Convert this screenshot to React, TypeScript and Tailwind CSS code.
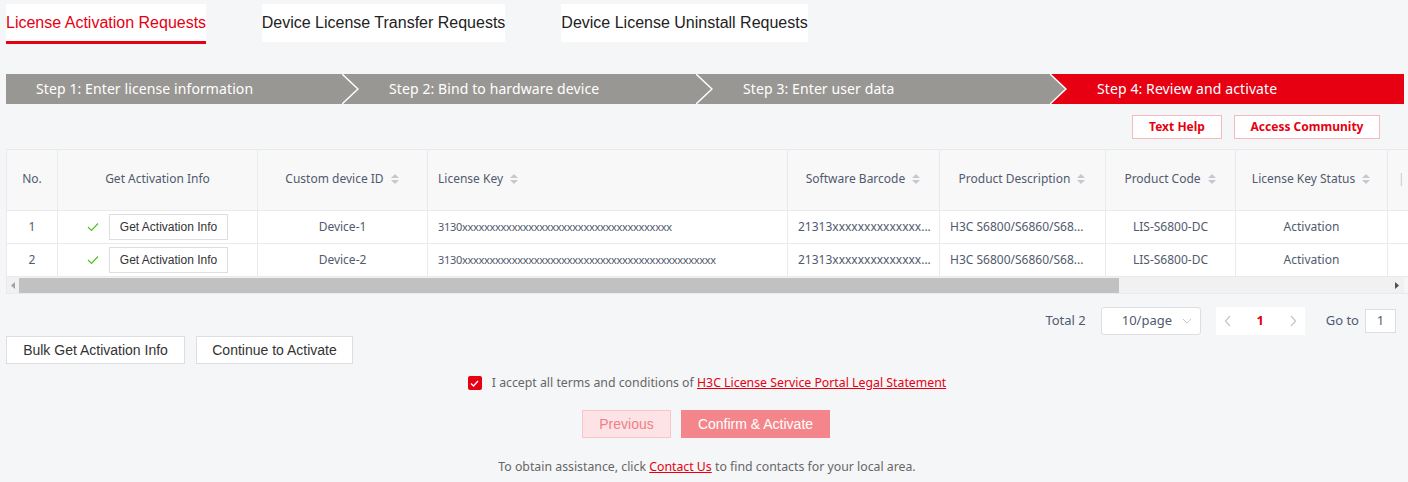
import React from "react";

const SANS = "font-['Noto_Sans',sans-serif]";
const ARIAL = "font-['Liberation_Sans',Arial,sans-serif]";

const steps = [
  { label: "Step 1: Enter license information", w: "w-[353px]" },
  { label: "Step 2: Bind to hardware device", w: "w-[354px]" },
  { label: "Step 3: Enter user data", w: "w-[354px]" },
  { label: "Step 4: Review and activate", w: "flex-1" },
];

const columns = [
  { title: "No.", w: "w-[51px]", sort: false, align: "center" },
  { title: "Get Activation Info", w: "w-[200px]", sort: false, align: "center" },
  { title: "Custom device ID", w: "w-[170px]", sort: true, align: "center" },
  { title: "License Key", w: "w-[360px]", sort: true, align: "left" },
  { title: "Software Barcode", w: "w-[152px]", sort: true, align: "center" },
  { title: "Product Description", w: "w-[166px]", sort: true, align: "center" },
  { title: "Product Code", w: "w-[130px]", sort: true, align: "center" },
  { title: "License Key Status", w: "w-[152px]", sort: true, align: "center" },
  { title: "Operation", w: "w-[140px]", sort: false, align: "left" },
];

const rows = [
  {
    no: 1,
    device: "Device-1",
    key: "3130" + "x".repeat(38),
    barcode: "21313xxxxxxxxxxxxxx...",
  },
  {
    no: 2,
    device: "Device-2",
    key: "3130" + "x".repeat(46),
    barcode: "21313xxxxxxxxxxxxxx...",
  },
];

function SortIcon() {
  return (
    <svg width="10" height="12" viewBox="0 0 10 12" className="ml-[6px] shrink-0">
      <path d="M5 1 L9 5 H1 Z" fill="#c5c8ce" />
      <path d="M5 11 L9 7 H1 Z" fill="#c5c8ce" />
    </svg>
  );
}

function Chevron({ next }: { next: string }) {
  return (
    <svg
      width="17"
      height="30"
      viewBox="0 0 17 30"
      className="absolute right-0 top-0"
      preserveAspectRatio="none"
    >
      <polygon points="0,0 17,0 17,30 0,30 16,15" fill={next} />
      <polyline points="0,0 16,15 0,30" fill="none" stroke="#ffffff" strokeWidth="1.5" />
    </svg>
  );
}

export default function App() {
  return (
    <div className={`w-[1408px] h-[482px] overflow-hidden bg-[#f5f6f8] pl-[6px] ${ARIAL}`}>
      {/* tabs */}
      <div className="flex gap-[56px] pt-[4px] h-[44px] whitespace-nowrap">
        <div className="w-[200px] bg-white h-[40px] flex items-center border-b-[3px] border-[#e60012] text-[#e60012] text-[16px]">
          License Activation Requests
        </div>
        <div className="w-[243px] bg-white h-[38px] flex items-center justify-center text-[16px] text-[#222]">
          Device License Transfer Requests
        </div>
        <div className="w-[247px] bg-white h-[38px] flex items-center justify-center text-[16px] text-[#222]">
          Device License Uninstall Requests
        </div>
      </div>

      {/* steps */}
      <div className={`mt-[30px] flex h-[30px] mr-[4px] ${SANS}`}>
        {steps.map((s, i) => (
          <div
            key={s.label}
            className={`relative ${s.w} h-full flex items-center pl-[30px] pb-[2px] text-white text-[14px] tracking-[0.1px] ${
              i === 3 ? "bg-[#e60012]" : "bg-[#999794]"
            }`}
          >
            {s.label}
            {i < 3 && <Chevron next={i === 2 ? "#e60012" : "#999794"} />}
          </div>
        ))}
      </div>

      {/* help buttons */}
      <div className={`flex justify-end gap-[12px] mt-[11px] mr-[28px] ${SANS}`}>
        <button className="h-[24px] w-[90px] bg-white border border-[#f6b9bc] text-[#e60012] text-[12px] font-bold">
          Text Help
        </button>
        <button className="h-[24px] w-[146px] bg-white border border-[#f6b9bc] text-[#e60012] text-[12px] font-bold">
          Access Community
        </button>
      </div>

      {/* table */}
      <div className={`mt-[10px] border border-[#e8eaec] border-r-0 overflow-hidden ${SANS}`}>
        <div className="flex h-[61px] bg-[#f8f8f9] border-b border-[#e8eaec]">
          {columns.map((c, i) => (
            <div
              key={c.title}
              className={`${c.w} shrink-0 flex items-center text-[12px] text-[#515a6e] pb-[2px] ${
                c.align === "center" ? "justify-center" : "pl-[10px]"
              } ${i < columns.length - 1 ? "border-r border-[#e8eaec]" : ""}`}
            >
              {c.title === "Operation" ? <span className="text-[#c5c8ce]">|</span> : c.title}
              {c.sort && <SortIcon />}
            </div>
          ))}
        </div>
        {rows.map((r) => (
          <div key={r.no} className="flex h-[33px] bg-white border-b border-[#e8eaec] text-[12px] text-[#515a6e]">
            <div className="w-[51px] shrink-0 flex items-center justify-center border-r border-[#e8eaec]">{r.no}</div>
            <div className="w-[200px] shrink-0 flex items-center justify-center gap-[10px] border-r border-[#e8eaec]">
              <svg width="12" height="10" viewBox="0 0 12 10">
                <polyline points="1,5 4.5,8.5 11,1.5" fill="none" stroke="#52c41a" strokeWidth="1.2" />
              </svg>
              <button className={`h-[26px] px-[10px] bg-white border border-[#dcdee2] text-[12px] text-[#333] ${ARIAL}`}>
                Get Activation Info
              </button>
            </div>
            <div className="w-[170px] shrink-0 flex items-center justify-center border-r border-[#e8eaec]">{r.device}</div>
            <div className="w-[360px] shrink-0 flex items-center pl-[10px] text-[11px] tracking-[-0.3px] border-r border-[#e8eaec]">
              {r.key}
            </div>
            <div className="w-[152px] shrink-0 flex items-center pl-[10px] border-r border-[#e8eaec] whitespace-nowrap">
              {r.barcode}
            </div>
            <div className="w-[166px] shrink-0 flex items-center pl-[10px] border-r border-[#e8eaec] whitespace-nowrap">
              H3C S6800/S6860/S68...
            </div>
            <div className="w-[130px] shrink-0 flex items-center justify-center border-r border-[#e8eaec]">LIS-S6800-DC</div>
            <div className="w-[152px] shrink-0 flex items-center justify-center border-r border-[#e8eaec]">Activation</div>
            <div className="w-[140px] shrink-0" />
          </div>
        ))}
        {/* scrollbar */}
        <div className="flex items-center h-[16px] bg-[#f1f1f1] mr-[4px]">
          <div className="w-[12px] flex justify-center">
            <svg width="4" height="7" viewBox="0 0 4 7"><path d="M4 0 L0 3.5 L4 7 Z" fill="#a3a3a3" /></svg>
          </div>
          <div className="w-[1100px] h-[15px] bg-[#c1c1c1]" />
          <div className="flex-1" />
          <div className="w-[14px] flex justify-center">
            <svg width="4" height="7" viewBox="0 0 4 7"><path d="M0 0 L4 3.5 L0 7 Z" fill="#505050" /></svg>
          </div>
        </div>
      </div>

      {/* pagination */}
      <div className={`flex justify-end items-center mt-[13px] mr-[12px] text-[13px] text-[#515a6e] ${SANS}`}>
        <span className="mr-[15px]">Total 2</span>
        <div className="w-[100px] h-[28px] bg-white border border-[#dcdee2] rounded-[3px] flex items-center justify-between pl-[20px] pr-[8px]">
          <span>10/page</span>
          <svg width="10" height="6" viewBox="0 0 10 6">
            <polyline points="1,1 5,5 9,1" fill="none" stroke="#c5c8ce" strokeWidth="1" />
          </svg>
        </div>
        <div className="ml-[15px] w-[89px] h-[28px] bg-white flex items-center justify-between px-[8px]">
          <svg width="8" height="12" viewBox="0 0 8 12">
            <polyline points="6,1 1.5,6 6,11" fill="none" stroke="#c5c8ce" strokeWidth="1.3" />
          </svg>
          <span className="text-[#e60012] font-bold">1</span>
          <svg width="8" height="12" viewBox="0 0 8 12">
            <polyline points="2,1 6.5,6 2,11" fill="none" stroke="#c5c8ce" strokeWidth="1.3" />
          </svg>
        </div>
        <span className="ml-[21px] mr-[6px]">Go to</span>
        <div className="w-[31px] h-[24px] bg-white border border-[#dcdee2] flex items-center justify-center">1</div>
      </div>

      {/* bulk buttons */}
      <div className="flex gap-[11px] mt-[1px]">
        <button className="h-[28px] w-[179px] bg-white border border-[#dcdee2] text-[14px] text-[#333]">
          Bulk Get Activation Info
        </button>
        <button className="h-[28px] w-[157px] bg-white border border-[#dcdee2] text-[14px] text-[#333]">
          Continue to Activate
        </button>
      </div>

      {/* terms */}
      <div className={`flex justify-center items-center mt-[10px] text-[12.3px] text-[#666] ${SANS}`}>
        <div className="w-[14px] h-[14px] rounded-[2px] bg-[#e60012] flex items-center justify-center mr-[10px]">
          <svg width="9" height="7" viewBox="0 0 9 7">
            <polyline points="1,3.5 3.5,6 8,1" fill="none" stroke="#fff" strokeWidth="1.3" />
          </svg>
        </div>
        <span>
          I accept all terms and conditions of{" "}
          <a className="text-[#e60012] underline">H3C License Service Portal Legal Statement</a>
        </span>
      </div>

      <div className="flex justify-center gap-[10px] mt-[18px] mr-[2px]">
        <button className="h-[28px] w-[89px] bg-[#fde3e5] border border-[#fbc4c8] text-[14px] text-[#f07f87]">
          Previous
        </button>
        <button className="h-[28px] w-[149px] bg-[#f4868b] text-[14px] text-white font-medium">
          Confirm &amp; Activate
        </button>
      </div>

      <div className={`text-center mt-[20px] text-[12.3px] text-[#666] ${SANS}`}>
        To obtain assistance, click <a className="text-[#e60012] underline">Contact Us</a> to find contacts for your
        local area.
      </div>
    </div>
  );
}
